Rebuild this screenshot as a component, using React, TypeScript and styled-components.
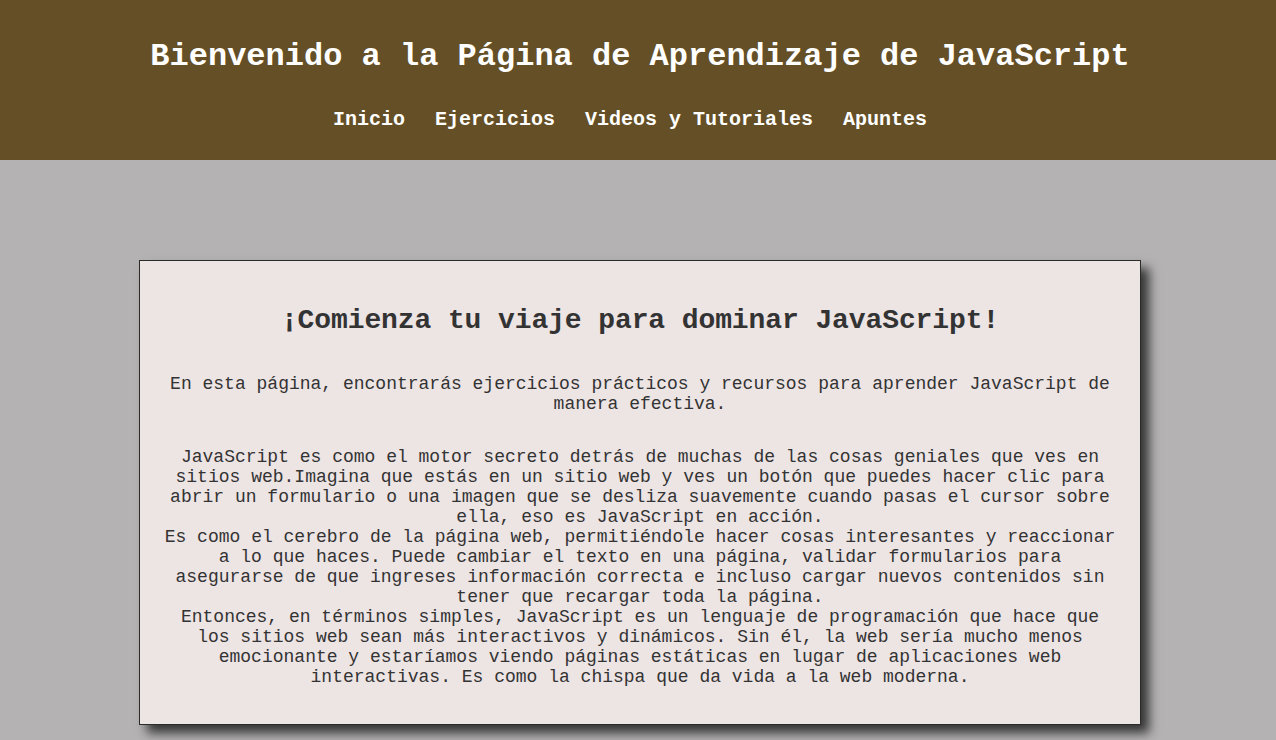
import styled, { createGlobalStyle } from "styled-components";

const GlobalStyle = createGlobalStyle`
  body {
    margin: 0;
    background-color: #b4b2b2;
    font-family: "Liberation Mono", "Courier New", monospace;
  }
`;

const Header = styled.header`
  background-color: #654f26;
  padding: 39px 0 29px 4px;
  text-align: center;
  color: #ffffff;
`;

const Title = styled.h1`
  margin: 0;
  font-size: 32px;
  line-height: 36px;
  font-weight: bold;
`;

const Nav = styled.nav`
  display: flex;
  justify-content: center;
  gap: 30px;
  margin-top: 33px;
  padding-right: 20px;
`;

const NavLink = styled.a`
  color: #ffffff;
  text-decoration: none;
  font-size: 20px;
  line-height: 23px;
  font-weight: bold;
`;

const Card = styled.section`
  box-sizing: border-box;
  width: 1002px;
  margin: 100px auto 40px calc(50% - 499px);
  padding: 20px;
  background-color: #ede4e4;
  border: 1px solid #2b2b2b;
  box-shadow: 8px 8px 10px rgba(0, 0, 0, 0.7);
  color: #333333;
  text-align: center;
`;

const Heading = styled.h2`
  margin: 24px 0 37px;
  font-size: 28px;
  line-height: 32px;
  font-weight: bold;
  letter-spacing: -0.1px;
`;

const Text = styled.p`
  margin: 0 0 33px;
  font-size: 18px;
  line-height: 20px;
  &:last-child {
    margin-bottom: 17px;
  }
`;

const links = ["Inicio", "Ejercicios", "Videos y Tutoriales", "Apuntes"];

function App() {
  return (
    <>
      <GlobalStyle />
      <Header>
        <Title>Bienvenido a la Página de Aprendizaje de JavaScript</Title>
        <Nav>
          {links.map((l) => (
            <NavLink key={l} href="#">
              {l}
            </NavLink>
          ))}
        </Nav>
      </Header>
      <Card>
        <Heading>¡Comienza tu viaje para dominar JavaScript!</Heading>
        <Text>
          En esta página, encontrarás ejercicios prácticos y recursos para
          aprender JavaScript de manera efectiva.
        </Text>
        <Text>
          JavaScript es como el motor secreto detrás de muchas de las cosas
          geniales que ves en sitios web.Imagina que estás en un sitio web y ves
          un botón que puedes hacer clic para abrir un formulario o una imagen
          que se desliza suavemente cuando pasas el cursor sobre ella, eso es
          JavaScript en acción.
          <br />
          Es como el cerebro de la página web, permitiéndole hacer cosas
          interesantes y reaccionar a lo que haces. Puede cambiar el texto en
          una página, validar formularios para asegurarse de que ingreses
          información correcta e incluso cargar nuevos contenidos sin tener que
          recargar toda la página.
          <br />
          Entonces, en términos simples, JavaScript es un lenguaje de
          programación que hace que los sitios web sean más interactivos y
          dinámicos. Sin él, la web sería mucho menos emocionante y estaríamos
          viendo páginas estáticas en lugar de aplicaciones web interactivas. Es
          como la chispa que da vida a la web moderna.
        </Text>
      </Card>
    </>
  );
}

export default App;
